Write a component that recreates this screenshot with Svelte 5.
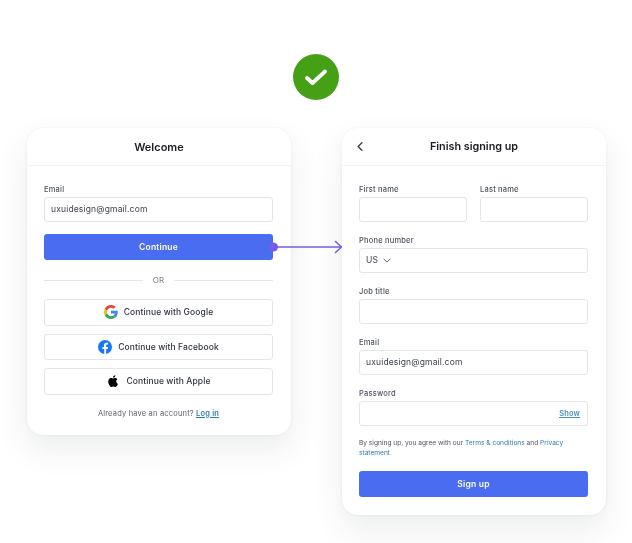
<script lang="ts">
	const socials = ['google', 'facebook', 'apple'];
	const socialLabels: Record<string, string> = {
		google: 'Continue with Google',
		facebook: 'Continue with Facebook',
		apple: 'Continue with Apple'
	};
</script>

<div class="page">
	<div class="top">
		<svg class="check" viewBox="0 0 46 46" width="46" height="46">
			<circle cx="23" cy="23" r="23" fill="#45a015" />
			<path d="M14 24l5.500 5L32 17.500" fill="none" stroke="#fff" stroke-width="3.800" stroke-linecap="round" stroke-linejoin="round" />
		</svg>
	</div>

	<div class="cards">
		<section class="card left">
			<header class="head"><h2>Welcome</h2></header>
			<div class="body">
				<div class="field">
					<label for="em1">Email</label>
					<div class="input" id="em1">uxuidesign@gmail.com</div>
				</div>
				<button class="primary">Continue</button>
				<div class="or"><span>OR</span></div>
				<div class="socials">
					{#each socials as s}
						<button class="social">
							{#if s === 'google'}
								<svg viewBox="0 0 48 48" width="14" height="14">
									<path fill="#EA4335" d="M24 9.500c3.500 0 6.700 1.200 9.200 3.600l6.900-6.900C35.900 2.400 30.500 0 24 0 14.600 0 6.500 5.400 2.600 13.200l8 6.200C12.500 13.600 17.800 9.500 24 9.500z" />
									<path fill="#4285F4" d="M47 24.500c0-1.600-.1-3.100-.4-4.500H24v9h12.900c-.6 3-2.200 5.500-4.700 7.200l7.700 6C44.400 38.500 47 32.100 47 24.500z" />
									<path fill="#FBBC05" d="M10.600 28.600c-.5-1.400-.8-3-.8-4.600s.3-3.200.8-4.600l-8-6.200C.900 16.500 0 20.100 0 24s.9 7.500 2.600 10.800l8-6.200z" />
									<path fill="#34A853" d="M24 48c6.500 0 11.900-2.100 15.900-5.800l-7.700-6c-2.100 1.400-4.900 2.300-8.200 2.300-6.200 0-11.500-4.100-13.400-9.900l-8 6.200C6.500 42.600 14.600 48 24 48z" />
								</svg>
							{:else if s === 'facebook'}
								<svg viewBox="0 0 24 24" width="14" height="14">
									<circle cx="12" cy="12" r="12" fill="#1877f2" />
									<path fill="#fff" d="M16.700 15.500l.5-3.500h-3.300V9.800c0-1 .5-1.900 2-1.900h1.500v-3s-1.400-.2-2.700-.2c-2.700 0-4.500 1.700-4.500 4.600V12H7.600v3.500h3.100V24h3.200v-8.500z" />
								</svg>
							{:else}
								<svg viewBox="0 0 24 24" width="14" height="14">
									<path fill="#000" d="M17.500 12.700c0-2.500 2-3.700 2.100-3.800-1.200-1.700-3-1.900-3.600-2-1.500-.2-3 .9-3.800.9-.8 0-2-.9-3.300-.9-1.700 0-3.300 1-4.200 2.500-1.800 3.100-.5 7.800 1.300 10.300.9 1.200 1.900 2.600 3.200 2.600 1.300-.1 1.800-.8 3.400-.8s2 .8 3.400.8c1.400 0 2.300-1.300 3.100-2.500 1-1.400 1.400-2.800 1.400-2.900-.1 0-2.700-1-2.800-4.200zM15 5.200c.7-.9 1.200-2 1.100-3.200-1 0-2.300.7-3 1.500-.6.800-1.200 2-1.100 3.100 1.200.1 2.300-.6 3-1.400z" />
								</svg>
							{/if}
							<span>{socialLabels[s]}</span>
						</button>
					{/each}
				</div>
				<p class="already">Already have an account? <a href="#login">Log in</a></p>
			</div>
		</section>

		<section class="card right">
			<header class="head">
				<svg class="back" viewBox="0 0 8 12" width="6" height="9">
					<path d="M6.500 1L1.500 6l5 5" fill="none" stroke="#3c4250" stroke-width="1.900" stroke-linecap="round" stroke-linejoin="round" />
				</svg>
				<h2>Finish signing up</h2>
			</header>
			<div class="body">
				<div class="two">
					<div class="field"><label for="fn">First name</label><div class="input" id="fn"></div></div>
					<div class="field"><label for="ln">Last name</label><div class="input" id="ln"></div></div>
				</div>
				<div class="field">
					<label for="ph">Phone number</label>
					<div class="input" id="ph">
						<span>US</span>
						<svg class="chev" viewBox="0 0 10 6" width="8" height="5">
							<path d="M1 1l4 4 4-4" fill="none" stroke="#4a5060" stroke-width="1.100" stroke-linecap="round" stroke-linejoin="round" />
						</svg>
					</div>
				</div>
				<div class="field"><label for="jt">Job title</label><div class="input" id="jt"></div></div>
				<div class="field"><label for="em2">Email</label><div class="input" id="em2">uxuidesign@gmail.com</div></div>
				<div class="field">
					<label for="pw">Password</label>
					<div class="input pw" id="pw"><a href="#show">Show</a></div>
				</div>
				<p class="terms">
					By signing up, you agree with our <a class="plain" href="#terms">Terms &amp; conditions</a> and <a class="plain" href="#privacy">Privacy</a><br /><a class="plain" href="#privacy">statement</a>.
				</p>
				<button class="primary">Sign up</button>
			</div>
		</section>

		<svg class="arrow" viewBox="0 0 76 16" width="76" height="16">
			<circle cx="4.500" cy="8" r="4.500" fill="#7a5be6" />
			<path d="M4 8h68M66.500 2.500L72.500 8l-6 5.500" fill="none" stroke="#7a5be6" stroke-width="1.500" stroke-linecap="round" stroke-linejoin="round" />
		</svg>
	</div>
</div>

<style>
	:global(body) {
		background: #fff;
		font-family: Inter, "Liberation Sans", sans-serif;
		color: #1d2129;
	}
	.page {
		width: 632px;
		height: 543px;
		overflow: hidden;
		box-sizing: border-box;
		padding-top: 54px;
		filter: blur(0.35px);
	}
	.top {
		display: flex;
		justify-content: center;
		height: 46px;
		margin-bottom: 28px;
	}
	.cards {
		position: relative;
		display: flex;
		align-items: flex-start;
		gap: 51px;
		padding-left: 27px;
	}
	.card {
		width: 264px;
		background: #fff;
		border-radius: 16px;
		box-shadow: 0 0 3px rgba(30, 40, 60, 0.07), 0 14px 32px rgba(30, 40, 60, 0.09);
	}
	.head {
		position: relative;
		height: 37px;
		display: flex;
		align-items: center;
		justify-content: center;
		border-bottom: 1px solid #f1f2f4;
	}
	h2 {
		margin: 0;
		font-size: 11px;
		font-weight: 600;
		color: #1a1d24;
	}
	.right h2 {
		font-size: 10.800px;
	}
	.back {
		position: absolute;
		left: 15px;
		top: 14px;
	}
	.body {
		padding: 17px 18px 0 17px;
	}
	.left .body {
		padding-bottom: 16px;
	}
	.right .body {
		padding-bottom: 18px;
	}
	.field {
		display: flex;
		flex-direction: column;
		margin-bottom: 12.500px;
	}
	label {
		height: 14px;
		line-height: 13px;
		font-size: 7.500px;
		font-weight: 500;
		letter-spacing: 0.2px;
		color: #4d5360;
	}
	.input {
		box-sizing: border-box;
		height: 24.500px;
		display: flex;
		align-items: center;
		gap: 5px;
		padding: 0 7px 0 6px;
		border: 1px solid #e3e5e9;
		border-radius: 3px;
		background: #fff;
		font-size: 8.500px;
		letter-spacing: 0.16px;
		color: #3c4250;
	}
	.pw {
		justify-content: flex-end;
	}
	.pw a {
		font-size: 7.500px;
		font-weight: 600;
		color: #4b91bd;
	}
	a {
		color: #2c7cad;
		text-decoration: underline;
	}
	a.plain {
		text-decoration: none;
	}
	.primary {
		display: block;
		width: 100%;
		height: 26px;
		border: 0;
		border-radius: 3px;
		background: #4a6cf0;
		color: #fff;
		font-family: inherit;
		font-size: 8.500px;
		font-weight: 600;
		letter-spacing: 0.2px;
	}
	.or {
		display: flex;
		align-items: center;
		gap: 10px;
		height: 12px;
		margin: 14px 0 13px;
		font-size: 8px;
		letter-spacing: 0.2px;
		color: #7c818c;
	}
	.or::before,
	.or::after {
		content: "";
		flex: 1;
		height: 1px;
		background: #e6e7ea;
	}
	.socials {
		display: flex;
		flex-direction: column;
		gap: 8px;
	}
	.social {
		height: 26.500px;
		display: flex;
		align-items: center;
		justify-content: center;
		gap: 6px;
		border: 1px solid #e3e5e9;
		border-radius: 3px;
		background: #fff;
		font-family: inherit;
		font-size: 8.500px;
		font-weight: 500;
		letter-spacing: 0.1px;
		color: #2f3440;
	}
	.already {
		margin: 13px 0 0;
		text-align: center;
		font-size: 7.500px;
		line-height: 11px;
		letter-spacing: 0.18px;
		color: #5d626d;
	}
	.already a {
		font-weight: 600;
	}
	.two {
		display: grid;
		grid-template-columns: 108px 108px;
		gap: 13px;
	}
	.terms {
		margin: 0 0 13px;
		font-size: 6.600px;
		line-height: 10px;
		color: #4d5360;
	}
	.arrow {
		position: absolute;
		left: 269px;
		top: 111px;
	}
</style>
